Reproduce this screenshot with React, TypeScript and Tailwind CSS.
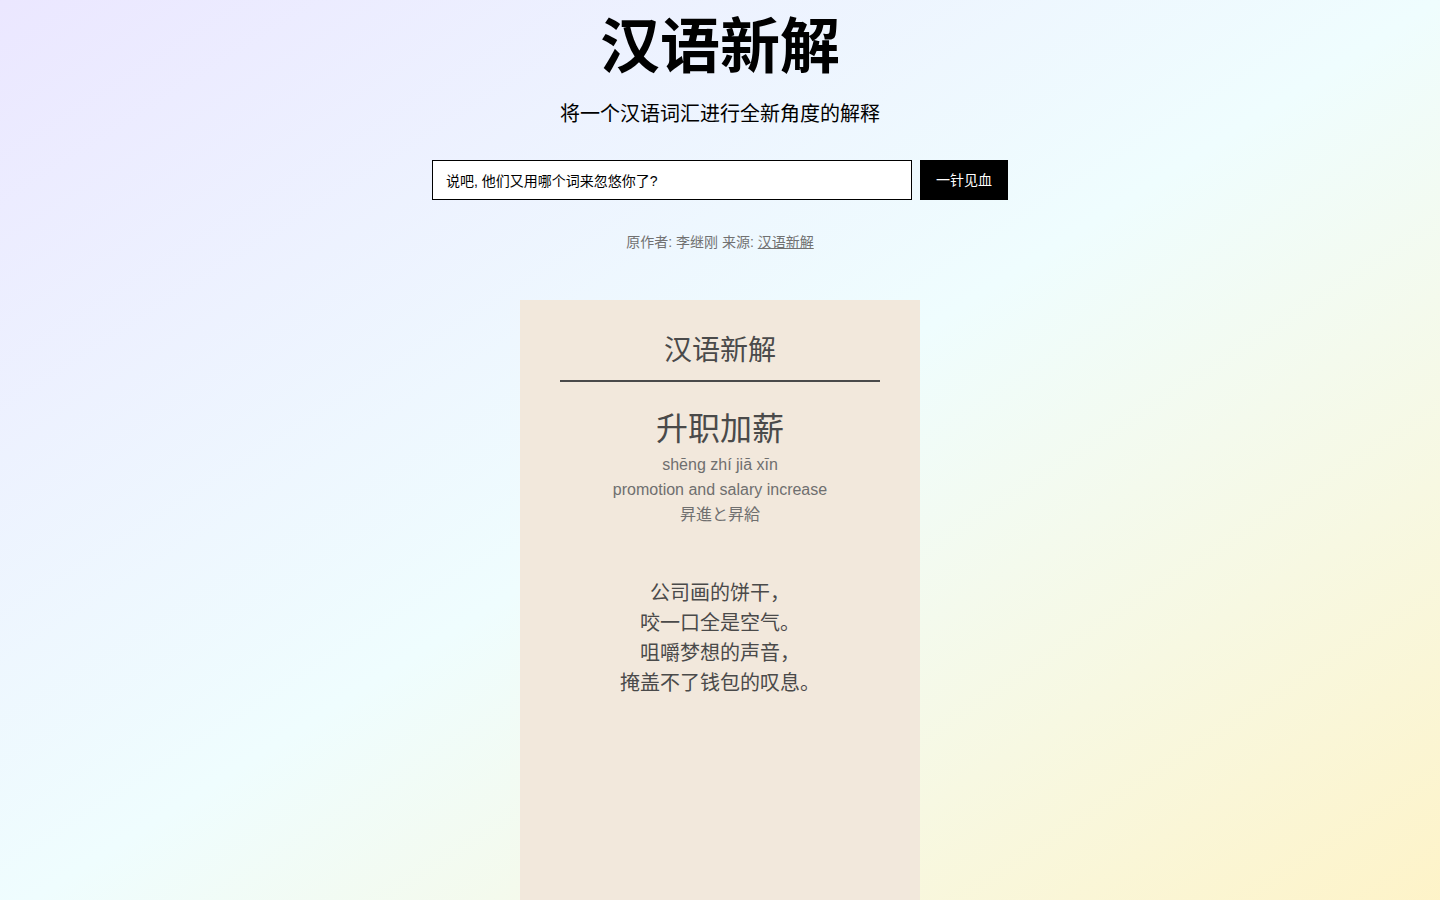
import React from "react";

export default function App() {
  const font = { fontFamily: '"Liberation Sans", "Noto Sans CJK SC", sans-serif' };
  return (
    <div
      className="min-h-screen w-full bg-gradient-to-br from-[#ebe7ff] via-[#effdfe] to-[#fef3c7] flex flex-col items-center overflow-hidden"
      style={font}
    >
      <h1 className="mt-[15px] text-[60px] leading-[66px] font-bold text-black">汉语新解</h1>
      <p className="mt-[19px] text-[20px] leading-[28px] text-black">将一个汉语词汇进行全新角度的解释</p>
      <div className="mt-[32px] flex gap-2">
        <input
          className="w-[480px] h-[40px] border border-black bg-white px-[13px] text-[14px] text-black outline-none"
          defaultValue="说吧, 他们又用哪个词来忽悠你了?"
          style={font}
        />
        <button className="w-[88px] h-[40px] bg-black text-white text-[14px]" style={font}>
          一针见血
        </button>
      </div>
      <p className="mt-[32px] text-[14px] leading-[20px] text-[#717171]">
        原作者: 李继刚 来源: <span className="underline">汉语新解</span>
      </p>
      <div className="mt-[48px] w-[400px] min-h-[620px] bg-[#f2e8dc] px-[40px] pt-[30px] flex flex-col items-center text-[#4a4a4a]">
        <div className="w-full text-center text-[28px] leading-[42px] pb-[8px] border-b-2 border-[#4a4a4a]">汉语新解</div>
        <div className="mt-[27px] text-[32px] leading-[40px]">升职加薪</div>
        <div className="mt-[3px] text-[16px] leading-[25px] text-[#6f6f6f] text-center">
          <div>shēng zhí jiā xīn</div>
          <div>promotion and salary increase</div>
          <div style={{ fontFamily: '"Liberation Sans", "Noto Sans CJK JP", sans-serif' }}>昇進と昇給</div>
        </div>
        <div className="mt-[51px] text-[20px] leading-[30px] text-center">
          <div>公司画的饼干，</div>
          <div>咬一口全是空气。</div>
          <div>咀嚼梦想的声音，</div>
          <div>掩盖不了钱包的叹息。</div>
        </div>
      </div>
    </div>
  );
}
